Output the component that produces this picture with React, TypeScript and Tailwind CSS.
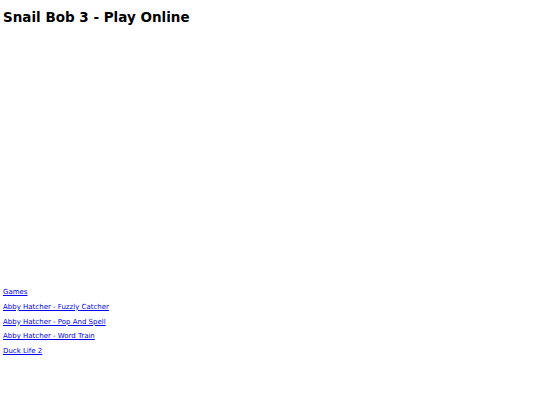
export default function App() {
  const links = [
    'Games',
    'Abby Hatcher - Fuzzly Catcher',
    'Abby Hatcher - Pop And Spell',
    'Abby Hatcher - Word Train',
    'Duck Life 2',
  ]

  return (
    <div className="bg-white min-h-[405px] px-[3px] pt-[9px] text-black" style={{ fontFamily: '"DejaVu Sans", sans-serif' }}>
      <h1 className="text-[13.5px] font-bold leading-[16px]">Snail Bob 3 - Play Online</h1>
      {/* game frame placeholder */}
      <div className="h-[260px]" />
      <ul className="flex flex-col">
        {links.map(l => (
          <li key={l} className="text-[7px] leading-[14.75px]">
            <a href="#" className="text-[#0000ee] underline">{l}</a>
          </li>
        ))}
      </ul>
    </div>
  )
}
